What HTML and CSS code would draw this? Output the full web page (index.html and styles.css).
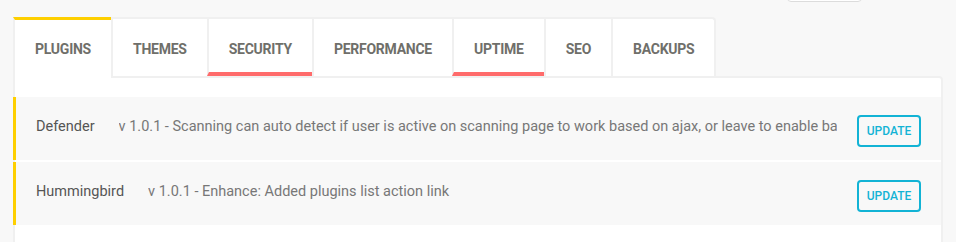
FILE: index.html
```html
<!DOCTYPE html>
<html>
<head>
<meta charset="utf-8">
<link rel="stylesheet" href="styles.css">
</head>
<body>
<div class="topbar"><div class="top-btn"></div></div>
<div class="tabs">
  <div class="tab active">PLUGINS</div>
  <div class="tab">THEMES</div>
  <div class="tab alert">SECURITY</div>
  <div class="tab">PERFORMANCE</div>
  <div class="tab alert">UPTIME</div>
  <div class="tab">SEO</div>
  <div class="tab last">BACKUPS</div>
</div>
<div class="panel">
  <div class="row">
    <div class="name">Defender</div>
    <div class="desc">v 1.0.1 - Scanning can auto detect if user is active on scanning page to work based on ajax, or leave to enable background scanning</div>
    <button class="update">UPDATE</button>
  </div>
  <div class="row">
    <div class="name">Hummingbird</div>
    <div class="desc">v 1.0.1 - Enhance: Added plugins list action link</div>
    <button class="update">UPDATE</button>
  </div>
</div>
</body>
</html>
```
FILE: styles.css
```css
html, body {
  margin: 0;
  padding: 0;
  background: #f8f8f8;
  font-family: Roboto, "Liberation Sans", sans-serif;
}
.topbar {
  height: 17px;
  display: flex;
  justify-content: flex-end;
}
.top-btn {
  width: 73px;
  height: 28px;
  margin-top: -28px;
  margin-right: 94px;
  background: #fff;
  border: 1px solid #dcdcdc;
  border-radius: 4px;
}
.tabs {
  display: flex;
  margin-left: 13px;
  position: relative;
  z-index: 2;
}
.tab {
  background: #fff;
  border-left: 2px solid #f0f0f0;
  border-top: 2px solid #f0f0f0;
  padding: 20px 20px 17px;
  line-height: 20px;
  font-size: 14px;
  letter-spacing: -0.25px;
  font-weight: 700;
  color: #6f6f6a;
}
.tab.active {
  border-top: 3px solid #fecf00;
  padding-top: 19px;
  padding-bottom: 19px;
  margin-bottom: -2px;
}
.tab.alert {
  border-bottom: 4px solid #ff6b6b;
  padding-bottom: 13px;
}
.tab.last {
  border-right: 2px solid #f0f0f0;
  border-top-right-radius: 4px;
}
.panel {
  margin-left: 13px;
  width: 926px;
  background: #fff;
  border: 2px solid #f0f0f0;
  border-radius: 0 4px 4px 4px;
  padding: 19px 0 30px;
  display: flex;
  flex-direction: column;
  gap: 2px;
}
.row {
  margin-left: -2px;
  display: flex;
  align-items: flex-start;
  background: #f8f8f8;
  border-left: 3px solid #fecf00;
  padding: 18px 20px 13px 20px;
}
.name {
  font-size: 14.5px;
  line-height: 20px;
  padding-top: 2px;
  color: #555;
  margin-right: 24px;
  white-space: nowrap;
}
.desc {
  flex: 1;
  min-width: 0;
  font-size: 14.5px;
  line-height: 20px;
  padding-top: 2px;
  color: #777;
  white-space: nowrap;
  overflow: hidden;
  margin-right: 20px;
}
.update {
  flex: none;
  width: 64px;
  height: 32px;
  padding: 0;
  background: transparent;
  border: 2px solid #12b3d5;
  border-radius: 4px;
  color: #12b3d5;
  font-family: Roboto, "Liberation Sans", sans-serif;
  font-size: 12px;
  font-weight: 500;
}
```
